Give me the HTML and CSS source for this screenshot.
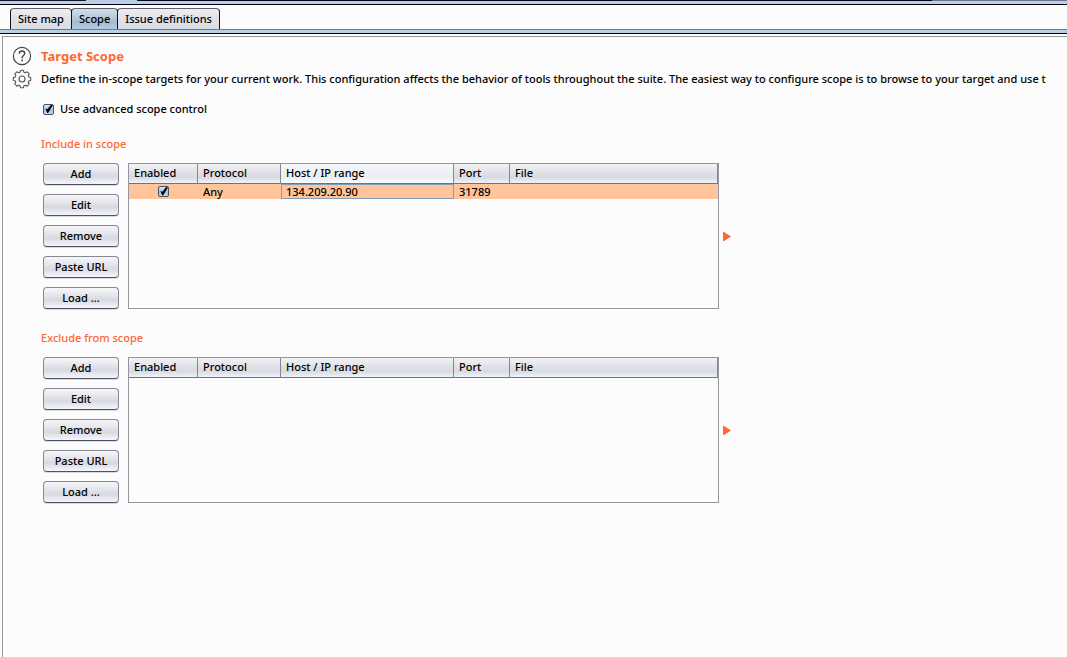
FILE: index.html
```
<!DOCTYPE html>
<html lang="en">
<head>
<meta charset="utf-8">
<title>Target Scope</title>
<link rel="stylesheet" href="styles.css">
</head>
<body>
<div class="window">
  <div class="top-edge"></div>
  <div class="top-band"></div>
  <nav class="tabs" role="tablist">
    <button class="tab" role="tab">Site map</button>
    <button class="tab tab-active" role="tab" aria-selected="true">Scope</button>
    <button class="tab" role="tab">Issue definitions</button>
  </nav>
  <div class="tab-band"></div>
  <main class="panel">
    <header class="intro">
      <button class="icon-button" aria-label="Help">
        <svg width="20" height="20" viewBox="0 0 20 20" fill="none" stroke="#444" stroke-width="1.2"><circle cx="10" cy="10" r="8.6"/><path d="M7.3 7.6C7.4 5.9 8.500 5 10 5s2.700 1 2.700 2.400c0 2-2.600 2.300-2.600 4.500v.5" stroke-width="1.4"/><circle cx="10.1" cy="14.4" r=".9" fill="#444" stroke="none"/></svg>
      </button>
      <h1 class="title">Target Scope</h1>
      <button class="icon-button" aria-label="Options">
        <svg width="20" height="20" viewBox="0 0 20 20" fill="none" stroke="#555" stroke-width="1.1" stroke-linejoin="round"><path d="M8.500 1.300h3l.4 1.900 1.500.6 1.700-1 2.100 2.100-1 1.700.6 1.500 1.900.4v3l-1.900.4-.6 1.500 1 1.700-2.100 2.100-1.700-1-1.500.6-.4 1.900h-3l-.4-1.900-1.500-.6-1.700 1-2.100-2.100 1-1.700-.6-1.500-1.900-.4v-3l1.900-.4.6-1.500-1-1.700 2.100-2.100 1.700 1 1.500-.6z"/><circle cx="10" cy="10" r="3"/></svg>
      </button>
      <p class="description">Define the in-scope targets for your current work. This configuration affects the behavior of tools throughout the suite. The easiest way to configure scope is to browse to your target and use t</p>
    </header>
    <label class="advanced"><input class="check" type="checkbox" checked>Use advanced scope control</label>

    <section class="scope">
      <h2 class="subtitle">Include in scope</h2>
      <div class="scope-body">
        <div class="actions">
          <button class="action">Add</button>
          <button class="action">Edit</button>
          <button class="action">Remove</button>
          <button class="action">Paste URL</button>
          <button class="action">Load ...</button>
        </div>
        <div class="table-box">
          <table class="rules">
            <colgroup><col class="col-enabled"><col class="col-protocol"><col class="col-host"><col class="col-port"><col></colgroup>
            <thead><tr><th>Enabled</th><th>Protocol</th><th class="hovered">Host / IP range</th><th>Port</th><th>File</th></tr></thead>
            <tbody><tr><td class="cell-check"><input class="check" type="checkbox" checked aria-label="Rule enabled"></td><td>Any</td><td class="focused">134.209.20.90</td><td>31789</td><td></td></tr></tbody>
          </table>
        </div>
        <button class="expand" aria-label="Expand"><svg width="8" height="9" viewBox="0 0 8 9"><path d="M0 0h1l7 4.500L1 9H0z" fill="#ff6633"/></svg></button>
      </div>
    </section>

    <section class="scope">
      <h2 class="subtitle">Exclude from scope</h2>
      <div class="scope-body">
        <div class="actions">
          <button class="action">Add</button>
          <button class="action">Edit</button>
          <button class="action">Remove</button>
          <button class="action">Paste URL</button>
          <button class="action">Load ...</button>
        </div>
        <div class="table-box">
          <table class="rules">
            <colgroup><col class="col-enabled"><col class="col-protocol"><col class="col-host"><col class="col-port"><col></colgroup>
            <thead><tr><th>Enabled</th><th>Protocol</th><th>Host / IP range</th><th>Port</th><th>File</th></tr></thead>
          </table>
        </div>
        <button class="expand" aria-label="Expand"><svg width="8" height="9" viewBox="0 0 8 9"><path d="M0 0h1l7 4.500L1 9H0z" fill="#ff6633"/></svg></button>
      </div>
    </section>
  </main>
</div>
</body>
</html>
```
FILE: styles.css
```
* { box-sizing: border-box; }
body {
  margin: 0;
  background: #fcfcfc;
  color: #000;
  font-family: "Noto Sans", "Open Sans", sans-serif;
  font-size: 11px;
  font-weight: 500;
  line-height: 16px;
}
button {
  margin: 0;
  padding: 0;
  border: 0;
  background: none;
  color: inherit;
  font: inherit;
}
h1, h2, p { margin: 0; }
svg { display: block; }
.window {
  display: flex;
  flex-direction: column;
  min-height: 100vh;
}
.top-edge {
  height: 1px;
  background: linear-gradient(to right, #101422 86px, #b8cfe5 86px, #b8cfe5 137px, #000014 137px, #000014 932px, #6c7488 932px);
}
.top-band {
  height: 4px;
  background: #b8cfe5;
  border-bottom: 1px solid #000014;
}
.tabs {
  display: flex;
  padding: 3px 10px 0;
}
.tab {
  height: 22px;
  padding: 0 7px;
  margin-right: -1px;
  border: 1px solid #10131c;
  border-top-color: #5c6070;
  border-radius: 4px 4px 0 0;
  background: linear-gradient(#eeeef1, #e0e1e7 50%, #dcdde4);
}
.tab-active { background: linear-gradient(#d2dee9, #b3c8d9 50%, #a3bbcf 60%, #b3cbe0); }
.tab-band {
  height: 5px;
  margin-top: -1px;
  border-top: 1px solid #64808e;
  border-bottom: 1px solid #000014;
  background: #b8cfe5;
}
.panel {
  flex: 1;
  margin: 2px 0 0 2px;
  padding: 9px 0 0 9px;
  border: solid #9297a1;
  border-width: 1px 0 0 1px;
}
.intro {
  display: grid;
  grid-template-columns: 20px minmax(0, 1fr);
  column-gap: 9px;
  row-gap: 3px;
  align-items: center;
}
.icon-button { width: 20px; height: 20px; }
.title {
  color: #ff6633;
  font-size: 13px;
  line-height: 18px;
}
.description {
  overflow: hidden;
  white-space: nowrap;
}
.advanced {
  display: flex;
  align-items: center;
  width: max-content;
  gap: 6px;
  margin: 12px 0 0 31px;
}
.check {
  appearance: none;
  width: 11px;
  height: 11px;
  margin: 0;
  border: 1px solid #43536a;
  border-radius: 2px;
  background: linear-gradient(#dbe7f2, #a9c1d8 60%, #c3dbf0);
  position: relative;
}
.check:checked::after {
  content: "";
  position: absolute;
  inset: 0;
  background: #000;
  clip-path: polygon(15% 45%, 38% 52%, 80% 0, 100% 5%, 45% 95%, 36% 95%);
}
.scope { margin: 19px 0 0 29px; }
.scope + .scope { margin-top: 21px; }
.subtitle {
  color: #ff6633;
  font-size: 11px;
  font-weight: 500;
  line-height: 16px;
}
.scope-body {
  display: flex;
  margin: 11px 0 0 2px;
}
.actions {
  display: flex;
  flex-direction: column;
  gap: 9px;
  width: 76px;
}
.action {
  height: 22px;
  border: 1px solid #858892;
  border-bottom-color: #50535f;
  border-radius: 4px;
  background: linear-gradient(#f7f7f9, #e0e2e8 45%, #d7d9e0 60%, #f4f6ff);
  box-shadow: 0 1px 0 #d8dade;
}
.table-box {
  width: 591px;
  margin-left: 9px;
  border: 1px solid #9297a1;
}
.rules {
  width: 100%;
  table-layout: fixed;
  border-collapse: separate;
  border-spacing: 0;
}
.col-enabled { width: 69px; }
.col-protocol { width: 83px; }
.col-host { width: 173px; }
.col-port { width: 56px; }
.rules th {
  height: 20px;
  padding: 0 5px 1px;
  border-right: 1px solid #858892;
  border-bottom: 1px solid #6f7380;
  background: linear-gradient(#f3f3f5, #e0e1e7 45%, #d8dadf 70%, #eef3fc);
  font-weight: 500;
  text-align: left;
}
.rules .hovered { background: linear-gradient(#f6f7f9, #edf0f5 45%, #e9edf4 70%, #fff); }
.rules td {
  height: 15px;
  padding: 0 5px;
  background: #ffc499;
  line-height: 13px;
}
.rules .cell-check { padding: 0; text-align: center; }
.cell-check .check { display: block; margin: 0 auto; }
.rules .focused {
  padding: 0 4px;
  border: 1px solid #7f9fbc;
}
.expand {
  align-self: center;
  margin-left: 4px;
}
```
